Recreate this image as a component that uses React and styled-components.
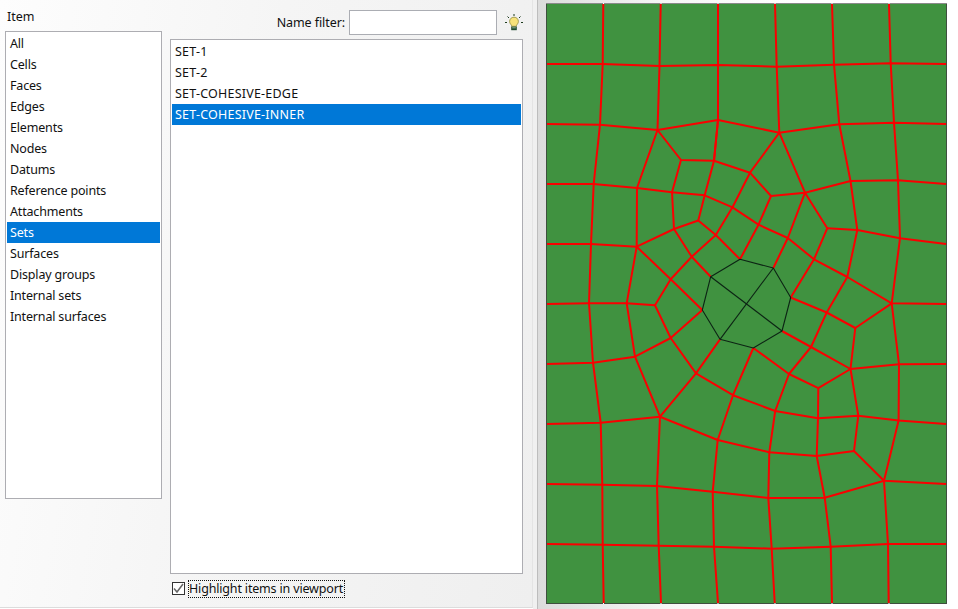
import React from "react";
import styled, { createGlobalStyle } from "styled-components";

const GlobalStyle = createGlobalStyle`
  html, body {
    margin: 0;
    padding: 0;
    height: 100%;
    background: #fff;
    overflow: hidden;
  }
  #root {
    height: 100%;
  }
`;

const Page = styled.div`
  display: flex;
  width: 958px;
  height: 609px;
  font-family: "Noto Sans", "Open Sans", sans-serif;
  font-size: 12.5px;
  color: #111;
`;

const Dialog = styled.div`
  box-sizing: border-box;
  width: 533px;
  height: 608px;
  border-bottom: 1px solid #dcdcdc;
  border-right: 1px solid #e4e4e4;
  background: linear-gradient(100deg, #fdfdfd 0%, #f5f5f5 45%, #efefef 100%);
  display: flex;
  gap: 8px;
  padding: 0 9px 0 5px;
`;

const ItemColumn = styled.div`
  width: 157px;
  display: flex;
  flex-direction: column;
`;

const ItemLabel = styled.div`
  height: 31px;
  line-height: 34px;
  padding-left: 2px;
`;

const SetColumn = styled.div`
  width: 353px;
  display: flex;
  flex-direction: column;
`;

const FilterRow = styled.div`
  height: 39px;
  box-sizing: border-box;
  padding-top: 10px;
  display: flex;
  align-items: flex-start;
  justify-content: flex-end;
`;

const FilterLabel = styled.label`
  line-height: 25px;
  margin-right: 4px;
  letter-spacing: -0.08px;
`;

const FilterInput = styled.input`
  box-sizing: border-box;
  width: 148px;
  height: 25px;
  margin: 0 8px 0 0;
  padding: 0 3px;
  border: 1px solid #abadb3;
  background: #fff;
  outline: none;
`;

const BulbWrap = styled.div`
  width: 18px;
  height: 25px;
  display: flex;
  align-items: center;
`;

const ListBox = styled.ul`
  box-sizing: border-box;
  list-style: none;
  margin: 0;
  padding: 1px;
  border: 1px solid #adadb2;
  background: #fff;
  width: 100%;
  height: ${(p) => p.$height}px;
  letter-spacing: ${(p) => p.$spacing}px;
`;

const ListRow = styled.li`
  height: 21px;
  line-height: 21px;
  padding-left: 3px;
  background: ${(p) => (p.$selected ? "#0078d7" : "transparent")};
  color: ${(p) => (p.$selected ? "#fff" : "#111")};
  white-space: nowrap;
`;

const HighlightRow = styled.div`
  display: flex;
  align-items: center;
  height: 17px;
  margin-top: 6px;
  padding-left: 2px;
`;

const CheckBox = styled.span`
  box-sizing: border-box;
  width: 13px;
  height: 13px;
  border: 1px solid #333;
  background: #fff;
  display: flex;
  align-items: center;
  justify-content: center;
  margin-right: 3px;
`;

const HighlightLabel = styled.span`
  box-sizing: border-box;
  height: 18px;
  line-height: 16px;
  padding: 0 1px 0 0;
  border: 1px dotted #111;
  white-space: nowrap;
  letter-spacing: -0.17px;
`;

const Splitter = styled.div`
  box-sizing: border-box;
  width: 5px;
  height: 609px;
  background: #f0f0f0;
  border-right: 1px solid #bdbdbd;
`;

const ViewportArea = styled.div`
  flex: 1;
  height: 609px;
  display: flex;
  background: linear-gradient(90deg, #dcdcdc 0%, #f6f6f6 30%, #fff 60%);
  padding: 3px 0 0 8px;
  box-sizing: border-box;
`;

const Viewport = styled.svg`
  display: block;
  width: 402px;
  height: 603px;
`;

const items = [
  "All", "Cells", "Faces", "Edges", "Elements", "Nodes", "Datums", "Reference points",
  "Attachments", "Sets", "Surfaces", "Display groups", "Internal sets", "Internal surfaces",
];

const sets = ["SET-1", "SET-2", "SET-COHESIVE-EDGE", "SET-COHESIVE-INNER"];

// mesh lines in page coordinates, traced off the viewport
const redLines = [
  // columns from the top edge
  "603.3,4 602.7,64 600,124.7 593.7,184 591,244 589,303.3 593,362.7 600.7,422.7 602.3,484.7 602.7,544.7 603.7,603",
  "660.7,4 659.5,66 657.5,130 637,188 636.7,246.7 626.7,303.3 635,356.7 660,416.7 657,486 658.7,545.7 661,603",
  "718,4 718,65 718,120 714,160.7 704.7,195.3 698.3,220.5 715.8,235 740,259.3",
  "775,4 776.7,66.7 779.3,132.7 805,192.7 787.8,238 773.3,268",
  "832,4 834,64.7 839.3,124.3 850.5,181 857.3,230 847.3,277 826.7,312.5 811,347 789,374 775.2,411 769.3,452.3 768.3,498 771.7,548.7 774.7,603",
  "889,4 890.7,63.3 894,122.7 898,180.3 900,238.3 891.7,303.3 899,364.3 898.6,420.5 884,480.7 888,544 888.7,603",
  // rows from the left edge
  "547,64 602.7,64 659.5,66 718,65 776.7,66.7 834,64.7 890.7,63.3 946,64",
  "547,124 600,124.7 657.5,130 718,120 779.3,132.7 839.3,124.3 894,122.7 946,124",
  "547,184 593.7,184 637,188 672,192.2 704.7,195.3 732.5,207.3 758.5,224.7 787.8,238 814,259.3 847.3,277 891.7,303.3 946,304",
  "547,244 591,244 636.7,246.7 674,229 698.3,220.5",
  "547,304 589,303.3 626.7,303.3 655,305.3",
  "547,364 593,362.7 635,356.7 670.7,338 702.3,310",
  "547,424 600.7,422.7 660,416.7 717.7,440 769.3,452.3 816.7,456 854,451 884,480.7 946,484",
  "547,484 602.3,484.7 657,486 712.7,491.7 768.3,498 824.7,497.7 884,480.7",
  "547,544 602.7,544.7 658.7,545.7 714,546.7 771.7,548.7 830.7,546.7 888,544 946,544",
  // rings round the hole
  "657.5,130 681,160 714,160.7 718,120",
  "681,160 672,192.2 674,229 691.7,256.7 670.7,279.3 655,305.3 670.7,338 696,373.3 733,395.2 775.2,411 818,418.3 858.3,415.7 898.6,420.5 946,424",
  "714,160.7 750,172.7 771,196 758.5,224.7 740,259.3",
  "750,172.7 779.3,132.7",
  "771,196 805,192.7 850.5,181 898,180.3 946,184",
  "750,172.7 732.5,207.3 715.8,235 691.7,256.7",
  "805,192.7 827.3,228.2 814,259.3 790.7,297.5",
  "827.3,228.2 857.3,230 900,238.3 946,244",
  "636.7,246.7 670.7,279.3 702.3,310",
  "691.7,256.7 710.7,276.7",
  "790.7,297.5 826.7,312.5 855.3,328 891.7,303.3",
  "855.3,328 850.5,369 858.3,415.7 854,451",
  "782,331 811,347 850.5,369 899,364.3 946,364",
  "753.3,348 789,374 818.3,388.2 850.5,369",
  "818.3,388.2 818,418.3 816.7,456 824.7,497.7 830.7,546.7 832,603",
  "720,339.3 696,373.3 660,416.7",
  "753.3,348 733,395.2 717.7,440 712.7,491.7 714,546.7 718,603",
];

const blackLines = [
  "710.7,276.7 740,259.3 773.3,268 790.7,297.5 782,331 753.3,348 720,339.3 702.3,310 710.7,276.7",
  "710.7,276.7 782,331",
  "773.3,268 720,339.3",
];

const edgeTicks = [603.5, 661, 718, 775, 832, 889];

// page coordinates -> svg coordinates, the svg starts at (546, 3)
const toSvg = (pts) =>
  pts
    .split(" ")
    .map((p) => {
      const [x, y] = p.split(",").map(Number);
      return `${x - 546},${y - 3}`;
    })
    .join(" ");

const Bulb = () => (
  <svg width="18" height="18" viewBox="0 0 18 18">
    <path d="M9 0v2M2.5 2.5l1.5 1.5M15.5 2.5L14 4M0 8.5h2M16 8.5h2" stroke="#1d3b1d" strokeWidth="1" fill="none" />
    <path
      d="M9 3.2c-2.7 0-4.4 1.9-4.4 4.2 0 1.8 1.2 2.9 1.9 3.9v1h5v-1c.7-1 1.9-2.1 1.9-3.9 0-2.3-1.7-4.2-4.4-4.2z"
      fill="#f7e27a"
      stroke="#8f8a3a"
      strokeWidth="0.8"
    />
    <path d="M6.2 12.6h5.6v3.6H6.2z" fill="#1f4a2e" />
    <path d="M7.2 13.8h3.6" stroke="#9fc0a0" strokeWidth="0.9" />
  </svg>
);

const Mesh = () => (
  <Viewport viewBox="0 0 402 603">
    <rect x="0.5" y="0.5" width="400" height="600" fill="#409240" stroke="#3f4f3f" strokeWidth="1" />
    <path d="M0 0.5h401" stroke="#8a8a8a" strokeWidth="1" />
    {redLines.map((pts) => (
      <polyline key={pts} points={toSvg(pts)} fill="none" stroke="#fa0000" strokeWidth="2" strokeLinejoin="round" />
    ))}
    {blackLines.map((pts) => (
      <polyline key={pts} points={toSvg(pts)} fill="none" stroke="#0c2414" strokeWidth="1.1" strokeLinejoin="round" />
    ))}
    {edgeTicks.map((x) => (
      <path key={x} d={`M${x - 546} 0v1M${x - 546} 600v1`} stroke="#fff" strokeWidth="1" />
    ))}
  </Viewport>
);

export default function App() {
  return (
    <Page>
      <GlobalStyle />
      <Dialog>
        <ItemColumn>
          <ItemLabel>Item</ItemLabel>
          <ListBox $height={468} $spacing={-0.17}>
            {items.map((name) => (
              <ListRow key={name} $selected={name === "Sets"}>
                {name}
              </ListRow>
            ))}
          </ListBox>
        </ItemColumn>
        <SetColumn>
          <FilterRow>
            <FilterLabel>Name filter:</FilterLabel>
            <FilterInput />
            <BulbWrap>
              <Bulb />
            </BulbWrap>
          </FilterRow>
          <ListBox $height={535} $spacing={0.22}>
            {sets.map((name) => (
              <ListRow key={name} $selected={name === "SET-COHESIVE-INNER"}>
                {name}
              </ListRow>
            ))}
          </ListBox>
          <HighlightRow>
            <CheckBox>
              <svg width="11" height="11" viewBox="0 0 11 11">
                <path d="M1 5.5l3 3.5 6-8" fill="none" stroke="#666" strokeWidth="1.5" />
              </svg>
            </CheckBox>
            <HighlightLabel>Highlight items in viewport</HighlightLabel>
          </HighlightRow>
        </SetColumn>
      </Dialog>
      <Splitter />
      <ViewportArea>
        <Mesh />
      </ViewportArea>
    </Page>
  );
}
